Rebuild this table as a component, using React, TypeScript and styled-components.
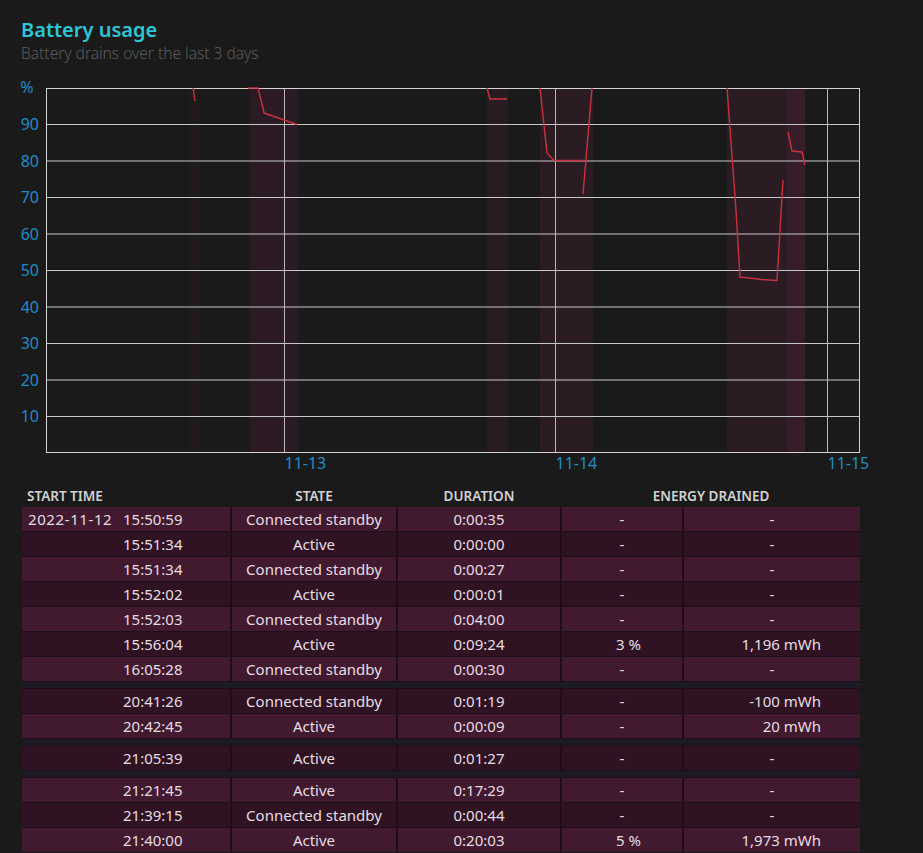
import styled, { createGlobalStyle } from "styled-components"

const GlobalStyle = createGlobalStyle`
  html, body {
    margin: 0;
    padding: 0;
    background: #1a1a1a;
  }
  body {
    font-family: "Noto Sans", "Open Sans", sans-serif;
    color: #e6dde2;
  }
`

interface IEntry {
  date?: string
  time: string
  state: string
  duration: string
  percent: string
  energy: string
}

// groups of entries, separated by a dark band
const groups: IEntry[][] = [
  [
    { date: "2022-11-12", time: "15:50:59", state: "Connected standby", duration: "0:00:35", percent: "-", energy: "-" },
    { time: "15:51:34", state: "Active", duration: "0:00:00", percent: "-", energy: "-" },
    { time: "15:51:34", state: "Connected standby", duration: "0:00:27", percent: "-", energy: "-" },
    { time: "15:52:02", state: "Active", duration: "0:00:01", percent: "-", energy: "-" },
    { time: "15:52:03", state: "Connected standby", duration: "0:04:00", percent: "-", energy: "-" },
    { time: "15:56:04", state: "Active", duration: "0:09:24", percent: "3 %", energy: "1,196 mWh" },
    { time: "16:05:28", state: "Connected standby", duration: "0:00:30", percent: "-", energy: "-" },
  ],
  [
    { time: "20:41:26", state: "Connected standby", duration: "0:01:19", percent: "-", energy: "-100 mWh" },
    { time: "20:42:45", state: "Active", duration: "0:00:09", percent: "-", energy: "20 mWh" },
  ],
  [{ time: "21:05:39", state: "Active", duration: "0:01:27", percent: "-", energy: "-" }],
  [
    { time: "21:21:45", state: "Active", duration: "0:17:29", percent: "-", energy: "-" },
    { time: "21:39:15", state: "Connected standby", duration: "0:00:44", percent: "-", energy: "-" },
    { time: "21:40:00", state: "Active", duration: "0:20:03", percent: "5 %", energy: "1,973 mWh" },
  ],
]

const Page = styled.div`
  width: 923px;
  min-height: 853px;
  overflow: hidden;
`

const Heading = styled.header`
  height: 64px;
  box-sizing: border-box;
  padding: 16px 0 0 21px;
`

const Title = styled.h1`
  margin: 0;
  font-size: 20px;
  line-height: 27px;
  font-weight: 600;
  color: #2cc6d6;
`

const Subtitle = styled.p`
  margin: 0;
  font-size: 15.5px;
  line-height: 20px;
  font-weight: 300;
  color: #5a5a5a;
`

const ChartSvg = styled.svg`
  display: block;
  margin-top: 6px;
`

const AxisText = styled.text`
  font-family: "Noto Sans", "Open Sans", sans-serif;
  font-size: 16px;
  fill: #1e8cc8;
`

const COLS = "208px 164px 162px 120px 176px"

const HeaderRow = styled.div`
  display: grid;
  grid-template-columns: ${COLS};
  column-gap: 2px;
  margin: 8px 0 0 22px;
  width: 838px;
  height: 20px;
  align-items: center;
  font-size: 13.5px;
  font-weight: 600;
  color: #d2d2d2;
`

const HeadCell = styled.div<{ $align?: "left" | "center"; $span?: number }>`
  text-align: ${(p) => p.$align ?? "center"};
  padding-left: ${(p) => (p.$align === "left" ? "5px" : "0")};
  grid-column: span ${(p) => p.$span ?? 1};
`

const Table = styled.div`
  display: flex;
  flex-direction: column;
  gap: 1px;
  margin: 1px 0 0 22px;
  width: 838px;
  background: #1f0d17;
`

const Row = styled.div<{ $odd: boolean }>`
  display: grid;
  grid-template-columns: ${COLS};
  column-gap: 2px;
  height: 24px;
  line-height: 24px;
  font-size: 15px;

  & > div {
    background: ${(p) => (p.$odd ? "#2f1322" : "#421a30")};
  }
`

const Band = styled.div`
  height: 6px;
  background: #1c1b25;
`

const Cell = styled.div<{ $pad?: number }>`
  text-align: ${(p) => (p.$pad ? "right" : "center")};
  padding-right: ${(p) => p.$pad ?? 0}px;
  white-space: nowrap;
`

const StartCell = styled.div`
  display: flex;
  padding-left: 6px;
  white-space: nowrap;
`

const DateText = styled.span`
  width: 95px;
  letter-spacing: 0.6px;
`

// plot frame in page coordinates
const X0 = 46
const X1 = 860
const Y0 = 88
const Y1 = 453
const pctY = (p: number) => Y1 - ((Y1 - Y0) * p) / 100

const bands = [
  { x: 189, w: 9, o: 0.08 },
  { x: 250, w: 48, o: 0.2 },
  { x: 487, w: 21, o: 0.15 },
  { x: 540, w: 53, o: 0.18 },
  { x: 727, w: 60, o: 0.18 },
  { x: 787, w: 18, o: 0.3 },
]

const lines = [
  "M193,88 L195,101",
  "M248,88 L258,88 L263,108 L264,113 L297,124.5",
  "M487,88 L490,99 L507,99",
  "M540,88 L547,153 L554,160.5 L585,160.5",
  "M592,88 L583,194",
  "M727,88 L736,210 L740,277 L762,279.5 L777,280.5 L783,180",
  "M788,132 L792,151 L802,152 L805,165",
]

const days = [
  { x: 284.5, label: "11-13" },
  { x: 555.5, label: "11-14" },
  { x: 827.5, label: "11-15" },
]

const Chart = () => (
  <ChartSvg width={923} height={408} viewBox="0 70 923 408">
    {bands.map((b) => (
      <rect key={b.x} x={b.x} y={Y0} width={b.w} height={Y1 - Y0} fill="#7a2050" opacity={b.o} />
    ))}
    {[10, 20, 30, 40, 50, 60, 70, 80, 90].map((p) => (
      <line key={p} x1={X0} x2={X1} y1={pctY(p)} y2={pctY(p)} stroke="#c8c8c8" strokeWidth={1} />
    ))}
    {days.map((d) => (
      <line key={d.label} x1={d.x} x2={d.x} y1={Y0} y2={Y1} stroke="#b8b8b8" strokeWidth={1} />
    ))}
    <rect x={X0 + 0.5} y={Y0 + 0.5} width={X1 - X0 - 1} height={Y1 - Y0 - 1} fill="none" stroke="#d4d4d4" />
    {lines.map((d) => (
      <path key={d} d={d} fill="none" stroke="#c8323f" strokeWidth={1.4} strokeLinejoin="round" />
    ))}
    <AxisText x={27} y={Y0 + 5} textAnchor="middle">%</AxisText>
    {[10, 20, 30, 40, 50, 60, 70, 80, 90].map((p) => (
      <AxisText key={p} x={39} y={pctY(p) + 5.5} textAnchor="end">
        {p}
      </AxisText>
    ))}
    {days.map((d) => (
      <AxisText key={d.label} x={d.x} y={469}>
        {d.label}
      </AxisText>
    ))}
  </ChartSvg>
)

const App = () => {
  let index = 0

  return (
    <Page>
      <GlobalStyle />
      <Heading>
        <Title>Battery usage</Title>
        <Subtitle>Battery drains over the last 3 days</Subtitle>
      </Heading>

      <Chart />

      <HeaderRow>
        <HeadCell $align="left">START TIME</HeadCell>
        <HeadCell>STATE</HeadCell>
        <HeadCell>DURATION</HeadCell>
        <HeadCell $span={2}>ENERGY DRAINED</HeadCell>
      </HeaderRow>

      <Table>
        {groups.map((group, g) => [
          g > 0 && <Band key={`band-${g}`} />,
          ...group.map((e) => {
            const odd = index++ % 2 === 1
            return (
              <Row key={`${g}-${e.time}-${e.state}`} $odd={odd}>
                <StartCell>
                  <DateText>{e.date}</DateText>
                  <span>{e.time}</span>
                </StartCell>
                <Cell>{e.state}</Cell>
                <Cell>{e.duration}</Cell>
                <Cell $pad={e.percent === "-" ? 0 : 41}>{e.percent}</Cell>
                <Cell $pad={e.energy === "-" ? 0 : 39}>{e.energy}</Cell>
              </Row>
            )
          }),
        ])}
      </Table>
    </Page>
  )
}

export default App
